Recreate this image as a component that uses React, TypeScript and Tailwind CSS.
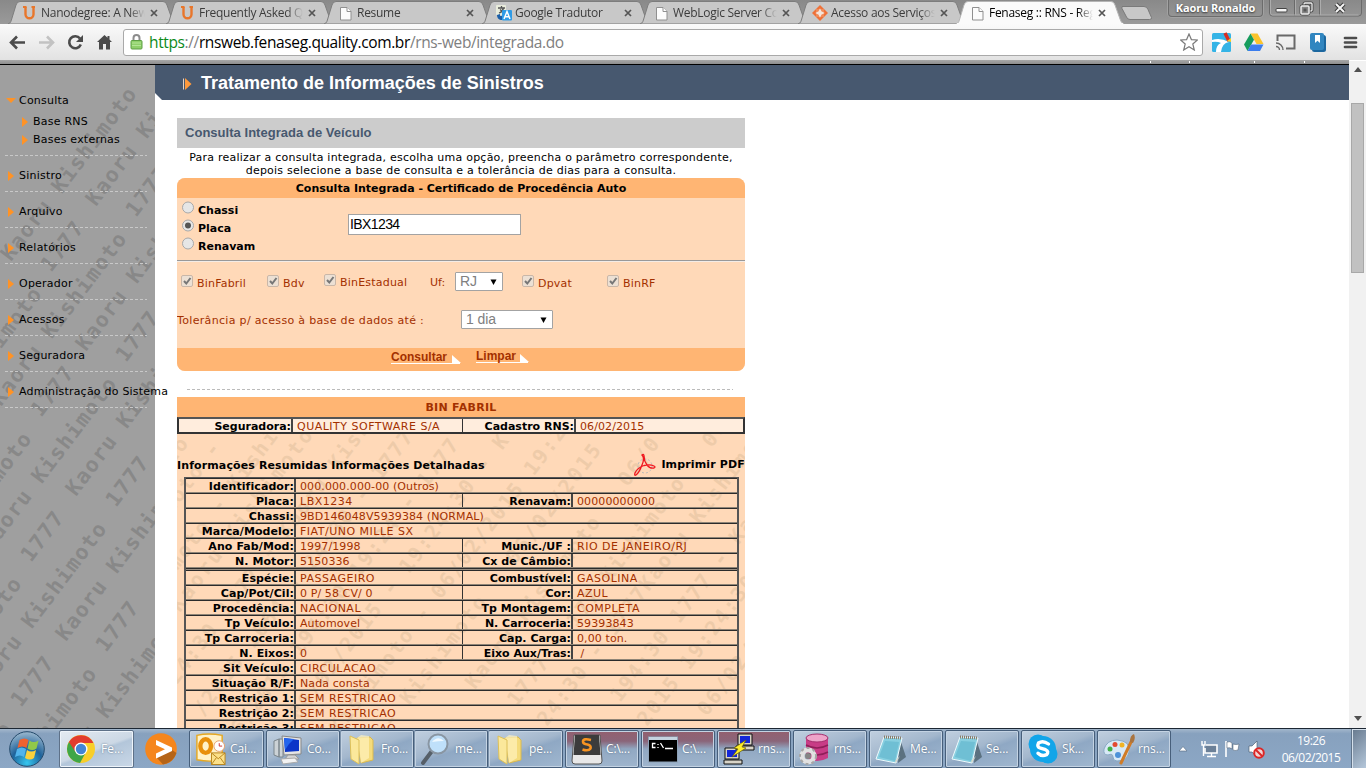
import React from "react";

const SANS = "font-['DejaVu_Sans','Liberation_Sans',sans-serif]";
const ARIAL = "font-['Liberation_Sans',Arial,sans-serif]";
const UI = "font-['Open_Sans','Noto_Sans',sans-serif]";

/* ---------- browser chrome ---------- */

function UdacityIcon() {
  return (
    <svg width="14" height="16" viewBox="0 0 14 16">
      <path d="M2.500 2v7.200a4 4 0 0 0 8 0V2" fill="none" stroke="#e8762b" strokeWidth="2.400" />
      <path d="M0 2h3.500M8.500 2h3.500" stroke="#e8762b" strokeWidth="1.800" />
    </svg>
  );
}

function FileIcon() {
  return (
    <svg width="14" height="16" viewBox="0 0 14 16">
      <path d="M1.500 2.500h6.500l4 4v8.500H1.500z" fill="#fcfcfc" stroke="#909090" />
      <path d="M8 2.500v4h4" fill="#fff" stroke="#909090" />
    </svg>
  );
}

function TranslateIcon() {
  return (
    <svg width="16" height="16" viewBox="0 0 16 16">
      <rect x="0" y="0" width="10" height="10" rx="1" fill="#e9ecdc" />
      <path d="M2 3h7M5.500 1v2M3 8c3-1 4-3 4.500-5M4 4.500l4 3.500" stroke="#555" fill="none" strokeWidth="1.300" />
      <path d="M1 10c0 3 2 5 5 5v-4H4V9z" fill="#1b5fa8" />
      <rect x="6" y="5" width="10" height="10.500" rx="1" fill="#2f9be6" />
      <path d="M8 14l3-7.500L14 14M9 11.800h4" stroke="#fff" strokeWidth="1.500" fill="none" />
    </svg>
  );
}

function DiamondIcon() {
  return (
    <svg width="16" height="16" viewBox="0 0 16 16">
      <path d="M8 0l4 4H4zM8 16l-4-4h8zM0 8l4-4v8zM16 8l-4 4V4z" fill="#ee7138" />
      <path d="M4 4h8v8H4z" fill="#f08a58" />
      <path d="M8 5l1 2 2 1-2 1-1 2-1-2-2-1 2-1z" fill="#f4e5dc" stroke="#f4e5dc" strokeWidth="1.500" />
    </svg>
  );
}

function Tab({ icon, title, active }: { icon: React.ReactNode; title: string; active?: boolean }) {
  return (
    <div className={"relative -mr-[10px] flex h-[23px] w-[168px] shrink-0 items-center pl-[14px] " + (active ? "z-10" : "")}>
      <svg className="absolute inset-0" width="168" height="23" viewBox="0 0 168 23">
        <path
          d="M0 23C3 22 3 20 4 17L8 4Q9 0.500 12 0.500H155Q158 0.500 159 4L164 18Q165 22 168 23Z"
          fill={active ? "#fafafa" : "#c8c8c8"}
          stroke={active ? "#b5b5b5" : "#7d7d7d"}
        />
        {active && <path d="M1 23h166" stroke="#fafafa" strokeWidth="2" />}
      </svg>
      <span className="relative flex w-4 justify-center">{icon}</span>
      <span
        className={
          "relative ml-[3px] w-[105px] overflow-hidden whitespace-nowrap text-[12px] leading-4 tracking-[-0.28px] [mask-image:linear-gradient(to_right,black_84%,transparent_99%)] " +
          (active ? "text-black" : "text-[#3c3c3c]")
        }
      >
        {title}
      </span>
      <svg className="relative ml-[4px]" width="8" height="8" viewBox="0 0 8 8">
        <path d="M1 1l6 6M7 1L1 7" stroke="#555" strokeWidth="1.700" />
      </svg>
    </div>
  );
}

function TabStrip() {
  return (
    <div className="flex h-6 items-end bg-[linear-gradient(#898989,#9a9a9a)] pl-2">
      <Tab icon={<UdacityIcon />} title="Nanodegree: A New" />
      <Tab icon={<UdacityIcon />} title="Frequently Asked Qu" />
      <Tab icon={<FileIcon />} title="Resume" />
      <Tab icon={<TranslateIcon />} title="Google Tradutor" />
      <Tab icon={<FileIcon />} title="WebLogic Server Co" />
      <Tab icon={<DiamondIcon />} title="Acesso aos Serviços" />
      <Tab active icon={<FileIcon />} title="Fenaseg :: RNS - Reg" />
      <svg className="mb-[3px] ml-[6px]" width="34" height="17" viewBox="0 0 34 17">
        <path d="M2 2.500h22q3 0 4 3l3.500 8q.5 2-2 2H10q-2.500 0-3.500-2.500L2 4.500q-1-2 1-2z" fill="#c8c8c8" stroke="#7a7a7a" />
      </svg>
      <div className="ml-[14px] flex h-[17px] w-[95px] items-center justify-center self-start rounded-b-[4px] border border-t-0 border-[#6c6c6c] text-[11px] font-bold tracking-[-0.1px] text-white shadow-[0_0_0_1px_#a2a2a2] [text-shadow:0_1px_2px_#333]">
        Kaoru Ronaldo
      </div>
      <svg className="ml-[6px] self-start" width="93" height="18" viewBox="0 0 93 18">
        <path d="M.5 0v13q0 3 3 3h86q3 0 3-3V0M25.500 0v16M50.500 0v16" fill="none" stroke="#6a6a6a" />
        <path d="M1.500 0v13q0 2 2 2h86M26.500 0v15M51.500 0v15" fill="none" stroke="#acacac" />
        <rect x="7" y="8.500" width="11" height="3.500" rx="1" fill="#f5f5f5" stroke="#444" />
        <rect x="35" y="3" width="8" height="8" rx="1" fill="none" stroke="#444" strokeWidth="3" />
        <rect x="35" y="3" width="8" height="8" rx="1" fill="none" stroke="#eee" strokeWidth="1.300" />
        <rect x="32" y="6" width="8" height="8" rx="1" fill="#858585" stroke="#444" strokeWidth="2.800" />
        <rect x="32" y="6" width="8" height="8" rx="1" fill="#858585" stroke="#eee" strokeWidth="1.500" />
        <path d="M34.500 8.500h3v3h-3z" fill="#555" />
        <path d="M67 4l8 8M75 4l-8 8" stroke="#3c3c3c" strokeWidth="4" />
        <path d="M67 4l8 8M75 4l-8 8" stroke="#f5f5f5" strokeWidth="2" />
      </svg>
    </div>
  );
}

function Toolbar() {
  return (
    <div className="flex h-9 items-center bg-[linear-gradient(#fafafa,#e2e2e2)]">
      <svg className="shrink-0" width="123" height="36" viewBox="0 0 123 36">
        <g fill="none" strokeWidth="2.600">
          <path d="M25 18.500H11M17 12.500l-6 6L17 24.500" stroke="#4b4b4b" />
          <path d="M39 18.500h14M47 12.500l6 6L47 24.500" stroke="#c2c2c2" />
          <path d="M80 14.500a6 6 0 1 0 .8 6" stroke="#4b4b4b" />
        </g>
        <path d="M83 11v7h-7z" fill="#4b4b4b" />
        <path d="M104.500 11l-7.500 7h2v7.500h4V20h3v5.500h4V18h2l-2.500-2.400V12h-2v1.700z" fill="#4b4b4b" />
      </svg>
      <div className="flex h-[27px] w-[1080px] shrink-0 items-center rounded-[3px] border border-[#a9a9a9] bg-white pl-[6px] pr-[4px]">
        <svg width="13" height="18" viewBox="0 0 13 18">
          <path d="M3.500 8V5a3 3 0 0 1 6 0v3" fill="none" stroke="#8c8c8c" strokeWidth="2" />
          <rect x="1" y="7.500" width="11" height="8.500" rx="1" fill="#8fd06a" stroke="#5d9e44" />
          <path d="M2 10h9M2 12.500h9" stroke="#b3e596" />
        </svg>
        <span className="ml-[6px] flex-1 whitespace-nowrap text-[15.500px] leading-5 tracking-[-0.375px] text-[#808080]">
          <span className="text-[#0b8a1a]">https</span>://<span className="text-black">rnsweb.fenaseg.quality.com.br</span>/rns-web/integrada.do
        </span>
        <svg width="18" height="18" viewBox="0 0 18 18">
          <path d="M9 1l2.400 5.600 6 .4-4.600 4 1.500 6L9 13.800 3.700 17l1.500-6L.6 7l6-.4z" fill="#fff" stroke="#7a7a7a" strokeWidth="1.200" />
        </svg>
      </div>
      <svg className="shrink-0" width="163" height="36" viewBox="0 0 163 36">
        <rect x="9" y="9" width="19" height="19" rx="1.500" fill="#35b4e6" />
        <path d="M9 16q8-3 17 2-7 1-8 10h-5q0-7 5-9-4-2-9-1z" fill="#fff" />
        <path d="M22 9l4 8" stroke="#d92d20" strokeWidth="3.500" />
        <path d="M24 17l4-3v4z" fill="#f9cf26" />
        <path d="M47.500 9.500h7l6 10.500h-7z" fill="#fbc42c" />
        <path d="M47.500 9.500L51 15.700 44.500 27 41 20.500z" fill="#169c5c" />
        <path d="M48 20.500h12.500L57 27H44.500z" fill="#3b7ded" />
        <path d="M74.500 17v-5.500h17v13H83" fill="none" stroke="#696969" strokeWidth="2" />
        <path d="M73 19a7 7 0 0 1 7 7M73 22.500a3.500 3.500 0 0 1 3.500 3.500" fill="none" stroke="#696969" strokeWidth="1.400" />
        <rect x="109" y="11" width="14" height="17" rx="2.500" fill="#1c679f" />
        <rect x="107" y="9" width="14" height="17" rx="2" fill="#3186c0" />
        <path d="M112 11h5v8l-2.500-2.300L112 19z" fill="#fff" />
        <path d="M142 14h11M142 18.500h11M142 23h11" stroke="#4c4c4c" strokeWidth="2.700" strokeLinecap="round" />
      </svg>
    </div>
  );
}

/* ---------- page ---------- */

type WM = [number, number, string];

function Watermark({ lines, width, height, color, size }: { lines: WM[]; width: number; height: number; color: string; size: number }) {
  return (
    <svg className="pointer-events-none absolute left-0 top-0" width={width} height={height}>
      {lines.map(([x, y, t], i) => (
        <text
          key={i}
          transform={`translate(${x} ${y}) rotate(-53)`}
          fontFamily="DejaVu Sans Mono, monospace"
          fontWeight="bold"
          fontSize={size}
          textLength={t.length * 14}
          fill={color}
        >
          {t}
        </text>
      ))}
    </svg>
  );
}

const sideLines: WM[] = [];
for (let j = 0; j < 6; j++) {
  for (let i = -1; i < 2; i++) {
    if (i === -1 && j === 0) continue;
    sideLines.push([11 + 85 * i - 10 * j, 197 - 55 * i + 145 * j, "Kaoru Kishimoto"]);
    sideLines.push([51 + 85 * i - 10 * j, 208 - 55 * i + 145 * j, "1777"]);
  }
}

function Arrow() {
  return (
    <svg className="shrink-0" width="6" height="10" viewBox="0 0 6 10">
      <path d="M0 0l6 5-6 5z" fill="#ff9326" />
    </svg>
  );
}

const menu = ["Sinistro", "Arquivo", "Relatórios", "Operador", "Acessos", "Seguradora", "Administração do Sistema"];

function Sidebar() {
  return (
    <div className="relative z-10 w-[155px] shrink-0 bg-[#9f9f9f] pt-[27px] text-[11px] tracking-[0.22px] text-black">
      <Watermark lines={sideLines} width={155} height={663} color="#888888" size={21} />
      <div className="relative">
        <div className="flex h-[18px] items-center pl-[6px]">
          <svg className="-mt-[2px]" width="10" height="5" viewBox="0 0 10 5">
            <path d="M0 0h10L5 5z" fill="#ff9326" />
          </svg>
          <span className="ml-[3px]">Consulta</span>
        </div>
        <div className="mb-[6px] mt-[3px]">
          {["Base RNS", "Bases externas"].map((t) => (
            <div key={t} className="flex h-[18px] items-center pl-[22px]">
              <Arrow />
              <span className="ml-[5px]">{t}</span>
            </div>
          ))}
        </div>
        {menu.map((t) => (
          <div key={t} className="h-9">
            <div className="ml-[5px] h-px w-[142px] bg-[repeating-linear-gradient(to_right,#c8c8c8_0,#c8c8c8_3px,transparent_3px,transparent_5px)]" />
            <div className="flex h-[35px] items-center whitespace-nowrap pl-[8px] pt-[5px]">
              <Arrow />
              <span className="ml-[5px]">{t}</span>
            </div>
          </div>
        ))}
        <div className="ml-[5px] h-px w-[142px] bg-[repeating-linear-gradient(to_right,#c8c8c8_0,#c8c8c8_3px,transparent_3px,transparent_5px)]" />
      </div>
    </div>
  );
}

function Radio({ label, on }: { label: string; on?: boolean }) {
  return (
    <div className="flex h-[18px] items-start">
      <svg width="12" height="13" viewBox="0 0 12 13">
        <circle cx="6" cy="6.500" r="5.500" fill="#e6e6e6" stroke="#a8a8a8" />
        {on && <circle cx="6" cy="6.500" r="3" fill="#555" />}
      </svg>
      <span className="ml-1 mt-[3px] font-bold leading-[14px]">{label}</span>
    </div>
  );
}

function Check({ label, className }: { label: string; className: string }) {
  return (
    <div className={"flex shrink-0 items-start " + className}>
      <svg width="12" height="12" viewBox="0 0 12 12">
        <rect x=".5" y=".5" width="11" height="11" rx="1.500" fill="#ece0d4" stroke="#c9b7a8" />
        <path d="M3 6l2.300 2.500L9.500 3" fill="none" stroke="#777" strokeWidth="2" />
      </svg>
      <span className="ml-1 leading-[14px] tracking-[0.2px]">{label}</span>
    </div>
  );
}

function Select({ value, className }: { value: string; className: string }) {
  return (
    <div className={"flex h-[19px] shrink-0 items-center justify-between rounded-[1px] border border-[#a3a3a3] bg-white pl-1 pr-[5px] text-[14px] tracking-[-0.1px] text-[#808080] " + className}>
      <span className={ARIAL}>{value}</span>
      <svg width="7" height="6" viewBox="0 0 8 7">
        <path d="M.5.5h7L4 7z" fill="#000" />
      </svg>
    </div>
  );
}

function FormLink({ label, className }: { label: string; className: string }) {
  return (
    <div className={"flex h-[14px] items-end border-b border-white text-[12px] font-bold leading-[11px] text-[#a33000] " + ARIAL + " " + className}>
      <span>{label}</span>
      <svg className="-mr-px ml-auto" width="9" height="8" viewBox="0 0 9 8">
        <path d="M0 0l9 8H0z" fill="#fff" />
      </svg>
    </div>
  );
}

function SearchForm() {
  return (
    <div className="h-[193px] overflow-hidden rounded-[8px] bg-[#ffd9b8]">
      <div className="h-5 bg-[#ffb573] text-center font-bold leading-[21px]">Consulta Integrada - Certificado de Procedência Auto</div>
      <div className="flex h-[62px] pl-[5px] pt-[3px]">
        <div className="w-[166px]">
          <Radio label="Chassi" />
          <Radio label="Placa" on />
          <Radio label="Renavam" />
        </div>
        <input
          className={"mt-[13px] h-[21px] w-[173px] border border-[#a3a3a3] bg-white pl-[1px] text-[14px] tracking-[-0.6px] text-black outline-none " + ARIAL}
          defaultValue="IBX1234"
        />
      </div>
      <div className="h-[2px] border-t border-[#999] bg-[#f4ece6]" />
      <div className="flex h-[40px] items-start pl-1 pt-[10px] text-[#a33000]">
        <Check label="BinFabril" className="mt-[3px] w-[86px] [&_span]:mt-[2px]" />
        <Check label="Bdv" className="mt-[3px] w-[57px] [&_span]:mt-[2px]" />
        <Check label="BinEstadual" className="mt-[2px] w-[106px] [&_span]:mt-[2px]" />
        <span className="mt-[4px] w-[25px] shrink-0 leading-[14px]">Uf:</span>
        <Select value="RJ" className="w-[48px]" />
        <Check label="Dpvat" className="ml-[19px] mt-[3px] w-[85px] [&_span]:mt-[2px]" />
        <Check label="BinRF" className="mt-[3px] [&_span]:mt-[2px]" />
      </div>
      <div className="flex h-[46px] items-start pt-[8px] text-[#a33000]">
        <span className="mt-[4px] w-[284px] leading-[14px] tracking-[0.33px]">Tolerância p/ acesso à base de dados até :</span>
        <Select value="1 dia" className="w-[92px]" />
      </div>
      <div className="flex h-[23px] bg-[#ffb573] pl-[214px]">
        <FormLink label="Consultar" className="mt-[2px] w-[69px]" />
        <FormLink label="Limpar" className="ml-[16px] mt-[1px] w-[52px]" />
      </div>
    </div>
  );
}

function Label({ children, className }: { children?: React.ReactNode; className: string }) {
  return <div className={"shrink-0 whitespace-nowrap text-right font-bold text-black " + className}>{children}</div>;
}

function Value({ children, className = "flex-1" }: { children?: string; className?: string }) {
  const caps = !!children && /[A-Z]{3}/.test(children) && !/\d{5}/.test(children);
  return (
    <div className={"shrink-0 whitespace-pre border-l-2 border-[#444] pl-1 text-[#a33000] " + (caps ? "tracking-[0.5px] " : "tracking-[0.1px] ") + className}>
      {children}
    </div>
  );
}

function Row({ r }: { r: string[] }) {
  return (
    <div className="flex h-[15px] border-b border-t border-b-[#8f8577] border-t-[#2b2b2b] leading-[15px]">
      <Label className="w-[109px] tracking-[0.08px]">{r[0]}</Label>
      {r.length > 2 ? (
        <>
          <Value className="w-[168px]">{r[1]}</Value>
          <Label className="w-[109px] border-l border-[#333]">{r[2]}</Label>
          <Value>{r[3]}</Value>
        </>
      ) : (
        <Value>{r[1]}</Value>
      )}
    </div>
  );
}

const vehicle = [
  ["Identificador:", "000.000.000-00 (Outros)"],
  ["Placa:", "LBX1234", "Renavam:", "00000000000"],
  ["Chassi:", "9BD146048V5939384 (NORMAL)"],
  ["Marca/Modelo:", "FIAT/UNO MILLE SX"],
  ["Ano Fab/Mod:", "1997/1998", "Munic./UF :", "RIO DE JANEIRO/RJ"],
  ["N. Motor:", "5150336", "Cx de Câmbio:", ""],
];

const details = [
  ["Espécie:", "PASSAGEIRO", "Combustível:", "GASOLINA"],
  ["Cap/Pot/Cil:", "0 P/ 58 CV/ 0", "Cor:", "AZUL"],
  ["Procedência:", "NACIONAL", "Tp Montagem:", "COMPLETA"],
  ["Tp Veículo:", "Automovel", "N. Carroceria:", "59393843"],
  ["Tp Carroceria:", "", "Cap. Carga:", "0,00 ton."],
  ["N. Eixos:", "0", "Eixo Aux/Tras:", " /"],
  ["Sit Veículo:", "CIRCULACAO"],
  ["Situação R/F:", "Nada consta"],
  ["Restrição 1:", "SEM RESTRICAO"],
  ["Restrição 2:", "SEM RESTRICAO"],
  ["Restrição 3:", "SEM RESTRICAO"],
];

const resultLines: WM[] = [
  [-4, 68, "to - K"],
  [-6, 118, "noto - 177"],
  [-8, 185, "imoto - Kishimo"],
  [3, 216, "Kaoru Kishimoto - "],
  [0, 288, "24:30 1777 - Kaoru Kish"],
  [26, 320, "/2015 1064 - 24:30 - 1777"],
  [55, 350, "06/2015 194:30 19:24 - 1777"],
  [105, 346, "- 06/02/2015 - 19:24:30 - K"],
  [162, 338, "Kishimoto - 06/02/2015 19:2"],
  [215, 332, "- Kishimoto - 06/02/2015 - "],
  [298, 293, "Kaoru Kishimoto - 06/0"],
  [340, 310, "1777 - 177 Kishimoto - 06/0"],
  [370, 330, "24:30 - 1777Kaoru Kishimoto"],
  [443, 306, "194:30 1777 - Kaoru"],
  [470, 330, "2015 19:24:30 1777"],
  [530, 320, "06/02/2015"],
];

function Results() {
  return (
    <div className="relative h-[360px] overflow-hidden bg-[#ffd9b8]">
      <Watermark lines={resultLines} width={568} height={360} color="#eecba9" size={20} />
      <div className="relative">
        <div className="h-5 bg-[#ffb573] text-center font-bold leading-[21px] tracking-[0.3px] text-[#a33000]">BIN FABRIL</div>
        <div className="flex h-[17px] border-2 border-b-2 border-[#333] border-b-[#333] border-t-[#555] bg-[#ffeddd] leading-[15px]">
          <Label className="w-[112px]">Seguradora:</Label>
          <Value className="w-[171px]">QUALITY SOFTWARE S/A</Value>
          <Label className="w-[112px] border-l border-[#333]">Cadastro RNS:</Label>
          <Value>06/02/2015</Value>
        </div>
        <div className="flex h-[43px] items-end justify-between font-bold leading-[14px]">
          <span className="mb-[4px] tracking-[0.12px]">Informações Resumidas Informações Detalhadas</span>
          <span className="flex items-center">
            <svg width="24" height="24" viewBox="0 0 24 24">
              <circle cx="12" cy="13" r="7" fill="none" stroke="#bbb" strokeDasharray="2 2" />
              <path d="M9 2q2-1.500 2 1 0 5 3 9 3 4 7 3 2-1 0-2-4-2-10-.5Q4 15 2 20q-1 3 1 2 3-2 6-10 3-7 0-10z" fill="none" stroke="#f0161e" strokeWidth="1.300" />
            </svg>
            <span className="ml-[4px] tracking-[0.15px]">Imprimir PDF</span>
          </span>
        </div>
        <div className="ml-[7px] w-[555px] border-l-2 border-r-2 border-t border-[#555] [&>div>:first-child]:-ml-px">
          {vehicle.map((r) => (
            <Row key={r[0]} r={r} />
          ))}
          <div className="h-[2px] border-t border-[#2b2b2b] bg-[#9a8f82]" />
          {details.map((r) => (
            <Row key={r[0]} r={r} />
          ))}
        </div>
      </div>
    </div>
  );
}

function Page() {
  return (
    <div className={"flex h-[668px] shrink-0 overflow-hidden " + SANS}>
      <div className="flex w-[1349px] flex-col">
        <div className="flex h-[5px] shrink-0 justify-end border-b border-black bg-[linear-gradient(#a8a8a8,#8e8e8e)]">
          <svg width="200" height="4" viewBox="0 0 200 4">
            <path d="M1 1h1v2H1zM40 1h1v2h-1zM105 1h1v2h-1zM155 1h1v2h-1z" fill="#fff" />
          </svg>
        </div>
        <div className="flex h-[663px]">
          <Sidebar />
          <div className="flex-1 bg-white text-[11px] text-black">
            <div className={"flex h-[35px] items-center bg-[#47586f] pl-[28px] pt-[2px] text-white [clip-path:polygon(0_0,100%_0,100%_100%,7px_100%,0_28px)] " + ARIAL}>
              <svg width="9" height="12" viewBox="0 0 9 12">
                <path d="M.5.500v11" stroke="#e8d4c4" />
                <path d="M2 0l6.500 6L2 12z" fill="#ff9a3c" />
              </svg>
              <span className="ml-[9px] text-[18px] font-bold tracking-[-0.01px]">Tratamento de Informações de Sinistros</span>
            </div>
            <div className="ml-[22px] mt-[18px] w-[568px]">
              <div className={"h-[30px] bg-[#ccc] pl-2 text-[13px] font-bold leading-[29px] tracking-[0.03px] text-[#47586f] " + ARIAL}>Consulta Integrada de Veículo</div>
              <p className="h-[30px] whitespace-nowrap pt-[3px] text-center leading-[13px] tracking-[0.23px]">
                Para realizar a consulta integrada, escolha uma opção, preencha o parâmetro correspondente,
                <br />
                depois selecione a base de consulta e a tolerância de dias para a consulta.
              </p>
              <SearchForm />
              <div className="mb-[7px] ml-[10px] mt-[18px] h-px w-[546px] bg-[repeating-linear-gradient(to_right,#bbb_0,#bbb_3px,transparent_3px,transparent_5px)]" />
              <Results />
            </div>
          </div>
        </div>
      </div>
      <div className="mt-px flex w-[17px] flex-col items-center bg-[#f1f1f1]">
        <svg className="mt-[6px]" width="8" height="5" viewBox="0 0 8 5">
          <path d="M0 5h8L4 0z" fill="#505050" />
        </svg>
        <div className="mt-[31px] h-[170px] w-[13px] border border-[#a8a8a8] bg-[#c1c1c1]" />
        <svg className="mb-[7px] mt-auto" width="8" height="5" viewBox="0 0 8 5">
          <path d="M0 0h8L4 5z" fill="#505050" />
        </svg>
      </div>
    </div>
  );
}

/* ---------- taskbar icons ---------- */

const StartOrb = () => (
  <svg className="shrink-0" width="36" height="36" viewBox="0 0 36 36">
    <defs>
      <radialGradient id="orb" cx=".5" cy=".9" r=".9">
        <stop offset="0" stopColor="#35c6ef" />
        <stop offset=".5" stopColor="#1f639b" />
        <stop offset="1" stopColor="#9db9cf" />
      </radialGradient>
    </defs>
    <circle cx="18" cy="18" r="17.300" fill="url(#orb)" stroke="#244a6b" />
    <path d="M10.500 9q5-3 9 0l-2 8q-4-3-9 0z" fill="#ef6230" />
    <path d="M20.500 9.500q4 3 9 0l-2 8q-4 3-9 0z" fill="#91c84a" />
    <path d="M8 18q5-3 9 0l-2 8q-4-3-9 0z" fill="#52b4ec" />
    <path d="M18 19q4 3 9 0l-2 8q-4 3-9 0z" fill="#fbd13c" />
  </svg>
);

const Chrome = () => (
  <svg width="30" height="30" viewBox="0 0 30 30">
    <circle cx="15" cy="15" r="14" fill="#f8ce29" />
    <path d="M2.900 8A14 14 0 0 0 14 29l6-11-5-3z" fill="#3fa648" />
    <path d="M2.900 8L9.500 18 15 9h12.400A14 14 0 0 0 2.900 8z" fill="#e23c2e" />
    <circle cx="15" cy="15" r="6.500" fill="#fff" />
    <circle cx="15" cy="15" r="5.200" fill="#4285d6" />
  </svg>
);

const Player = () => (
  <svg width="32" height="32" viewBox="0 0 32 32">
    <circle cx="16" cy="16" r="15.800" fill="#f5861d" />
    <path d="M12 25l15-8 4.500 3Q28 30 18 31.500z" fill="#b56417" />
    <path d="M11 7l16 7.500v3.500L11 25.500v-5l9-4.300-9-4.200z" fill="#fff" />
  </svg>
);

const Outlook = () => (
  <svg width="34" height="34" viewBox="0 0 34 34">
    <path d="M3 3q12-3 26 0v25q-12 3-26 0z" fill="#fff2c8" stroke="#e5a823" strokeWidth="1.500" />
    <ellipse cx="12" cy="14" rx="5.500" ry="7" fill="none" stroke="#e8900c" strokeWidth="4.500" />
    <circle cx="26" cy="14" r="5.500" fill="#fff" stroke="#e5a06a" />
    <path d="M26 11v3h3" stroke="#c33" fill="none" />
    <path d="M18 21h14v12H18z" fill="#fbe08a" stroke="#b8841d" />
    <path d="M18 21l7 6 7-6M18 33l5-7M32 33l-5-7" fill="none" stroke="#b8841d" />
  </svg>
);

const Computer = () => (
  <svg width="32" height="32" viewBox="0 0 32 32">
    <path d="M2 8l5-2v18l-5-2zM7 6h4v18H7z" fill="#ccd2d6" stroke="#7b858c" />
    <path d="M10 3l19 2v16l-17 1z" fill="#e5e5e5" stroke="#888" />
    <path d="M12 5l15 2v11l-14 1z" fill="#0b35c8" />
    <path d="M12 5l10 1q-6 5-9 11z" fill="#2364ed" />
    <path d="M16 22h7l4 4H13z" fill="#d5d5d5" stroke="#999" />
    <path d="M9 26l14-1 3 4-15 2z" fill="#f2f2f2" stroke="#aaa" />
  </svg>
);

const Folder = () => (
  <svg width="28" height="32" viewBox="0 0 28 32">
    <path d="M9 5l13-1 3 3v20l-12 3z" fill="#f4db7b" stroke="#dab94e" />
    <path d="M9 5l4-3 8 1v22l-8 5z" fill="#fff2bd" opacity=".7" />
    <path d="M2 3l9 4v24l-8-5z" fill="#fbe89b" stroke="#ddc058" />
  </svg>
);

const Magnifier = () => (
  <svg width="32" height="32" viewBox="0 0 32 32">
    <path d="M12 18L3 30" stroke="#565f68" strokeWidth="4" strokeLinecap="round" />
    <circle cx="18" cy="11" r="9.500" fill="#bfe0fa" stroke="#8996a3" strokeWidth="2" />
    <path d="M12 9q6-7 12-1-6 0-12 1z" fill="#eef8ff" />
  </svg>
);

const Sublime = () => (
  <svg width="32" height="32" viewBox="0 0 32 32">
    <path d="M3 2h26l2 26q0 3-3 3H4q-3 0-3-3z" fill="#e8e8e8" stroke="#555" />
    <path d="M4 2h24l1.500 20H2.500z" fill="#3c3c3c" />
    <path d="M20 7Q12 5 12 8.500q0 2.500 4.500 3 4 1 3 4-2 3-8 1" fill="none" stroke="#f89422" strokeWidth="2.600" />
  </svg>
);

const Cmd = () => (
  <svg width="32" height="32" viewBox="0 0 32 32">
    <rect x="1.500" y="4" width="29" height="25" fill="#000" stroke="#8ea3b8" />
    <rect x="2" y="4" width="28" height="3" fill="#c5d3e0" />
    <g stroke="#fff" strokeWidth="1.300" fill="none">
      <path d="M8.500 10.500H5.500v4h3M11 11v1M11 14v1M13.500 10l3 5M18 15.500h8" />
    </g>
  </svg>
);

const Putty = () => (
  <svg width="32" height="32" viewBox="0 0 32 32">
    <g stroke="#111" fill="#d8d4c8">
      <path d="M15 1h14v11H15zM13 13h18v4H13zM2 15h14v11H2zM1 27h18v4H1z" />
    </g>
    <path d="M17 3h10v7H17zM4 17h10v7H4z" fill="#1326d8" />
    <path d="M23 7L11 15l4 1-6 8 14-9-4-1z" fill="#ffee2c" stroke="#6b6100" strokeWidth=".7" />
  </svg>
);

const Database = () => (
  <svg width="32" height="32" viewBox="0 0 32 32">
    <path d="M7 5v20q11 6 22 0V5z" fill="#c83c86" />
    <path d="M7 12q11 6 22 0M7 19q11 6 22 0" stroke="#8f1f59" strokeWidth="1.500" fill="none" />
    <ellipse cx="18" cy="5" rx="11" ry="4" fill="#eea3c9" stroke="#a52e6d" />
    <circle cx="9" cy="23" r="6" fill="none" stroke="#e1e1e1" strokeWidth="5" />
    <circle cx="9" cy="23" r="8" fill="none" stroke="#a5a5a5" strokeWidth="2" strokeDasharray="3 3" />
    <circle cx="9" cy="23" r="3" fill="#858585" />
  </svg>
);

const Notepad = () => (
  <svg width="32" height="32" viewBox="0 0 32 32">
    <path d="M25 6l6 18-8 6z" fill="#5b7180" />
    <path d="M9 4l18 1-6 25-20-4z" fill="#88cfe0" stroke="#eefafd" />
    <path d="M10 8l14 1-4 19-16-4z" fill="#56afc8" opacity=".5" />
    <path d="M9 4l18 1" stroke="#8a7c68" strokeWidth="3" strokeDasharray="1 1" />
    <path d="M21 30l4-7-5 5z" fill="#d8d8c8" />
  </svg>
);

const Skype = () => (
  <svg width="32" height="32" viewBox="0 0 32 32">
    <circle cx="11" cy="11" r="9.500" fill="#12a5e9" />
    <circle cx="21" cy="21" r="9.500" fill="#12a5e9" />
    <circle cx="16" cy="16" r="13" fill="#12a5e9" />
    <path d="M21.500 11Q16 7 11.500 10q-2 4 2 5.200l5 1.500q4 2 1 5-5 2-8.500-1.500" fill="none" stroke="#fff" strokeWidth="3.400" strokeLinecap="round" />
  </svg>
);

const Paint = () => (
  <svg width="32" height="32" viewBox="0 0 32 32">
    <path d="M14 7q14 1 12 12-2 9-12 9-4 0-4-4t-5-2q-5 0-4-6Q4 7 14 7z" fill="#d8e9f6" stroke="#89a9c4" />
    <circle cx="7" cy="16" r="2.500" fill="#43b04a" />
    <circle cx="12" cy="11.500" r="2.500" fill="#e34a32" />
    <circle cx="19" cy="12" r="2.500" fill="#f0b323" />
    <circle cx="15" cy="22" r="3" fill="#4d92d8" />
    <path d="M29 7L18 30" stroke="#d07c27" strokeWidth="3" strokeLinecap="round" />
    <path d="M27 9q0-7 4-8 2 5-1 9z" fill="#a97440" />
  </svg>
);

function TaskButton({ icon, label, className = "" }: { icon: React.ReactNode; label: string; className?: string }) {
  return (
    <div
      className={
        "flex h-[38px] shrink-0 items-center overflow-hidden rounded-[2px] border border-[#475f7b] pl-[4px] text-[12px] text-white shadow-[inset_0_0_0_1px_#c4d3e3] " +
        className
      }
    >
      <span className="flex w-[33px] shrink-0 justify-center">{icon}</span>
      <span className="ml-[3px] whitespace-nowrap tracking-[-0.1px] [text-shadow:0_0_2px_#52677e]">{label}</span>
    </div>
  );
}

const BLUE = "bg-[linear-gradient(160deg,#c0cfdf_0%,#a3b7cd_45%,#8fa8c4_55%,#a0b7cf_100%)] ";
const RED = "w-[74px] mr-[2px] bg-[linear-gradient(to_bottom,#93606f_0%,#8a6579_28%,#91a8c2_50%,#9fb5cd_100%)]";

function Taskbar() {
  return (
    <div className="flex h-10 shrink-0 items-center border-t border-[#1c2733] bg-[linear-gradient(#a3b7cc,#87a1be_12%,#8ca7c5)] pl-[9px]">
      <StartOrb />
      <div className="ml-[14px] flex h-[38px] w-[75px] shrink-0 items-center rounded-[2px] border border-[#5e7188] bg-[linear-gradient(160deg,#e4ebf2_0%,#ccd8e5_50%,#b3c6da_55%,#cad8e7_100%)] pl-[6px] text-[12px] text-white shadow-[inset_0_0_0_1px_#eef4fa]">
        <Chrome />
        <span className="ml-[5px] [text-shadow:0_0_2px_#52677e]">Fe...</span>
      </div>
      <div className="ml-[11px] mr-[12px] shrink-0">
        <Player />
      </div>
      <TaskButton icon={<Outlook />} label="Cai..." className={BLUE + "mr-[2px] w-[75px]"} />
      <TaskButton icon={<Computer />} label="Co..." className={BLUE + "w-[74px]"} />
      <TaskButton icon={<Folder />} label="Fro..." className={BLUE + "w-[74px] border-l-[#7d93ab]"} />
      <TaskButton icon={<Magnifier />} label="me..." className={BLUE + "w-[74px] border-l-[#7d93ab]"} />
      <TaskButton icon={<Folder />} label="pe..." className={BLUE + "mr-[2px] w-[75px] border-l-[#7d93ab]"} />
      <TaskButton icon={<Sublime />} label="C:\..." className={RED} />
      <TaskButton icon={<Cmd />} label="C:\..." className={RED} />
      <TaskButton icon={<Putty />} label="rns..." className={RED} />
      <TaskButton icon={<Database />} label="rns..." className={BLUE + "mr-[2px] w-[74px]"} />
      <TaskButton icon={<Notepad />} label="Me..." className={BLUE + "mr-[2px] w-[74px]"} />
      <TaskButton icon={<Notepad />} label="Se..." className={BLUE + "mr-[2px] w-[74px]"} />
      <TaskButton icon={<Skype />} label="Sk..." className={BLUE + "mr-[2px] w-[74px]"} />
      <TaskButton icon={<Paint />} label="rns..." className={BLUE + "w-[74px]"} />
      <svg className="ml-[7px] shrink-0" width="88" height="24" viewBox="0 0 88 24">
        <path d="M1 14h8L5 9.500z" fill="#fff" stroke="#51667d" strokeWidth=".6" />
        <path d="M28 8h11v8H27v-5" fill="#6b8098" stroke="#fff" strokeWidth="1.600" />
        <path d="M29 19.500h9M33.500 16v3M24 4v4h3V4M25.500 8v11" stroke="#fff" strokeWidth="1.400" fill="none" />
        <path d="M48 4v16" stroke="#fff" strokeWidth="1.600" />
        <path d="M49 5q3-1 5 1v6q-2-2-5-1zM55 7q3 1 6 0l-1 6q-3 1-5 0z" fill="#fff" stroke="#40546a" strokeWidth=".5" />
        <path d="M71 9h3l5-5v16l-5-5h-3z" fill="#fff" stroke="#40546a" strokeWidth=".6" />
        <circle cx="81" cy="16" r="4.800" fill="#f3d5d5" stroke="#dc2626" strokeWidth="2" />
        <path d="M78 13l6 6" stroke="#dc2626" strokeWidth="2" />
      </svg>
      <div className="ml-auto mr-[9px] w-[62px] whitespace-nowrap text-center text-[12px] leading-[17px] tracking-[-0.5px] text-white">
        19:26
        <br />
        06/02/2015
      </div>
      <div className="h-full w-[15px] shrink-0 border-l border-[#5f7389] bg-[linear-gradient(135deg,#66798e,#b5c7da)] shadow-[inset_1px_1px_0_#d5e0eb]" />
    </div>
  );
}

export default function App() {
  return (
    <div className={"flex h-[768px] w-[1366px] flex-col overflow-hidden bg-white " + UI}>
      <TabStrip />
      <Toolbar />
      <Page />
      <Taskbar />
    </div>
  );
}
